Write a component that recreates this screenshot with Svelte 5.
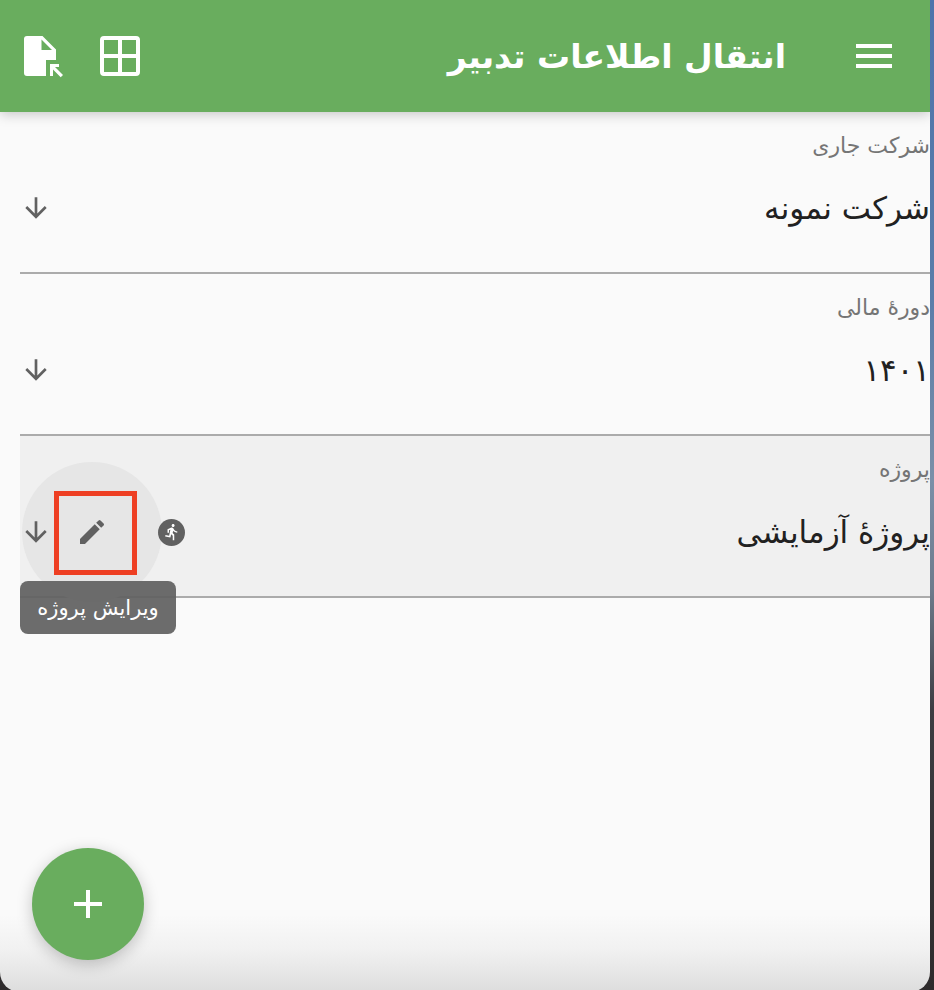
<script>
  const rows = [
    { label: 'شرکت جاری', value: 'شرکت نمونه' },
    { label: 'دورهٔ مالی', value: '۱۴۰۱' },
    { label: 'پروژه', value: 'پروژهٔ آزمایشی', active: true }
  ];
</script>

<div class="screen">
  <div class="panel" dir="rtl">
    <header class="bar">
      <div class="menu" aria-label="menu"><span></span><span></span><span></span></div>
      <h1>انتقال اطلاعات تدبیر</h1>
      <div class="spacer"></div>
      <div class="actions">
        <svg class="grid" width="48" height="48" viewBox="0 0 48 48" aria-hidden="true">
          <path fill="#fff" fill-rule="evenodd" d="M8 4h32a4 4 0 0 1 4 4v32a4 4 0 0 1-4 4H8a4 4 0 0 1-4-4V8a4 4 0 0 1 4-4zm0 4v14h14V8H8zm18 0v14h14V8H26zM8 26v14h14V26H8zm18 0v14h14V26H26z"/>
        </svg>
        <svg class="file" width="48" height="48" viewBox="0 0 48 48" aria-hidden="true">
          <path fill="#fff" fill-rule="evenodd" d="M7 4h15.5L36 17.5V28H26v16H7a3 3 0 0 1-3-3V7a3 3 0 0 1 3-3zM21.5 7.5V18H32z"/>
          <path fill="#fff" d="M30 32h9v3h-4l8 8-2.3 2.3-7.7-7.7V44h-3z"/>
        </svg>
      </div>
    </header>

    <main class="list">
      {#each rows as row}
        <section class="row" class:active={row.active}>
          <div class="label">{row.label}</div>
          <div class="line">
            <div class="value">{row.value}</div>
            {#if row.active}
              <div class="run">
                <svg width="18" height="18" viewBox="0 0 24 24" aria-hidden="true">
                  <path fill="#fff" d="M13.49 5.48c1.1 0 2-.9 2-2s-.9-2-2-2-2 .9-2 2 .9 2 2 2zm-3.6 13.9l1-4.4 2.1 2v6h2v-7.5l-2.1-2 .6-3c1.3 1.5 3.3 2.5 5.5 2.5v-2c-1.9 0-3.5-1-4.3-2.4l-1-1.6c-.4-.6-1-1-1.7-1-.3 0-.5.1-.8.1l-5.2 2.2v4.7h2v-3.4l1.8-.7-1.6 8.1-4.9-1-.4 2 7 1.4z"/>
                </svg>
              </div>
              <div class="halo">
                <svg width="32" height="32" viewBox="0 0 24 24" aria-hidden="true">
                  <path fill="#616161" d="M3 17.25V21h3.75L17.81 9.94l-3.75-3.75L3 17.25zM20.71 7.04a1 1 0 0 0 0-1.41l-2.34-2.34a1 1 0 0 0-1.41 0l-1.83 1.83 3.75 3.75 1.83-1.83z"/>
                </svg>
                <div class="mark"></div>
              </div>
            {/if}
            <svg class="arrow" width="32" height="32" viewBox="0 0 24 24" aria-hidden="true">
              <path fill="#616161" d="m20 12-1.41-1.41L13 16.17V4h-2v12.17l-5.58-5.59L4 12l8 8 8-8z"/>
            </svg>
          </div>
          {#if row.active}
            <div class="tip">ویرایش پروژه</div>
          {/if}
        </section>
      {/each}
    </main>

    <button class="fab" aria-label="add">
      <svg width="48" height="48" viewBox="0 0 24 24" aria-hidden="true">
        <path fill="#fff" d="M19 13h-6v6h-2v-6H5v-2h6V5h2v6h6v2z"/>
      </svg>
    </button>
  </div>
</div>

<style>
  :global(body) {
    margin: 0;
    background: #000;
  }
  .screen {
    width: 934px;
    height: 990px;
    overflow: hidden;
    background: linear-gradient(#4e74ab 0, #5b7da9 300px, #7b8fa8 480px, #6d7b8c 590px, #3d3d42 710px, #2e2b2c 990px);
  }
  .panel {
    position: relative;
    width: 930px;
    height: 992px;
    border-radius: 0 0 20px 20px;
    overflow: hidden;
    background: linear-gradient(#fafafa 0, #fafafa 915px, #f1f1f1 950px, #dedede 990px);
    font-family: "DejaVu Sans", sans-serif;
  }
  .bar {
    height: 112px;
    display: flex;
    align-items: center;
    background: #69ad5e;
    color: #fff;
    box-shadow: 0 2px 12px rgba(0, 0, 0, 0.22);
    position: relative;
    z-index: 1;
  }
  .menu {
    width: 36px;
    margin: 0 38px 0 0;
    display: flex;
    flex-direction: column;
    gap: 6px;
  }
  .menu span {
    height: 4px;
    background: #fff;
  }
  h1 {
    margin: 0 70px 0 0;
    font-size: 33px;
    font-weight: 700;
    line-height: 1;
  }
  .spacer {
    flex: 1;
  }
  .actions {
    display: flex;
    gap: 28px;
    margin-left: 20px;
  }
  .list {
    padding-left: 20px;
  }
  .row {
    height: 162px;
    box-sizing: border-box;
    border-bottom: 2px solid #ababab;
    position: relative;
    padding-top: 19px;
  }
  .row.active {
    background: #f0f0f0;
  }
  .label {
    font-size: 22px;
    line-height: 30px;
    color: #757575;
  }
  .line {
    display: flex;
    align-items: center;
    height: 64px;
    margin-top: 15px;
  }
  .value {
    flex: 1;
    font-size: 31px;
    color: #212121;
  }
  .arrow {
    flex: none;
    position: relative;
  }
  .run {
    width: 27px;
    height: 27px;
    margin-left: -4px;
    border-radius: 50%;
    background: #616161;
    display: flex;
    align-items: center;
    justify-content: center;
    flex: none;
    position: relative;
    z-index: 1;
  }
  .halo {
    width: 140px;
    height: 140px;
    margin-left: -30px;
    border-radius: 50%;
    background: #e6e6e6;
    flex: none;
    position: relative;
    display: flex;
    align-items: center;
    justify-content: center;
  }
  .mark {
    position: absolute;
    box-sizing: border-box;
    width: 83px;
    height: 84px;
    left: 32px;
    top: 29px;
    border: 5px solid #ee3f23;
  }
  .tip {
    position: absolute;
    left: 0;
    top: 145px;
    width: 156px;
    height: 53px;
    border-radius: 8px;
    background: rgba(97, 97, 97, 0.93);
    color: #fff;
    font-size: 21px;
    display: flex;
    align-items: center;
    justify-content: center;
    z-index: 2;
  }
  .fab {
    position: absolute;
    left: 32px;
    top: 848px;
    width: 112px;
    height: 112px;
    border: 0;
    padding: 0;
    border-radius: 50%;
    background: #69ad5e;
    box-shadow: 0 4px 16px rgba(0, 0, 0, 0.22);
    display: flex;
    align-items: center;
    justify-content: center;
  }
</style>
